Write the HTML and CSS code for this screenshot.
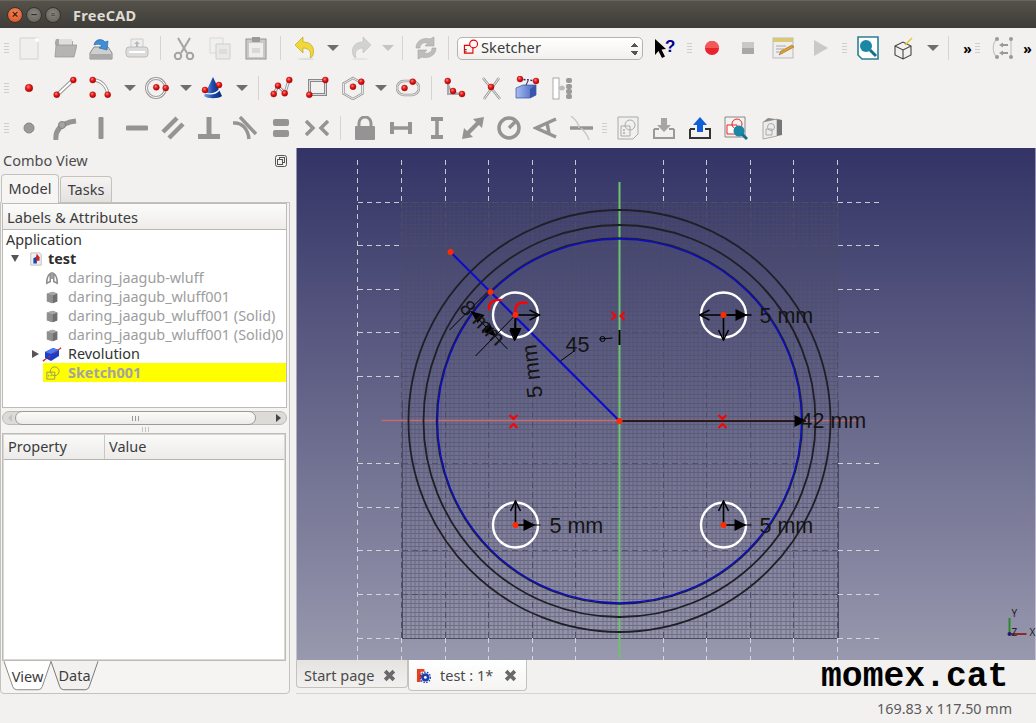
FILE: index.html
```html
<!DOCTYPE html>
<html lang="en">
<head>
<meta charset="utf-8">
<title>FreeCAD</title>
<link rel="stylesheet" href="styles.css">
</head>
<body>
<svg class="defs" width="0" height="0" aria-hidden="true">
<defs>
<radialGradient id="rb" cx="40%" cy="35%" r="65%"><stop offset="0" stop-color="#ff8a80"/><stop offset=".45" stop-color="#ee1c1c"/><stop offset="1" stop-color="#a00"/></radialGradient>
<linearGradient id="cone" x1="0" x2="1"><stop offset="0" stop-color="#7fa6e8"/><stop offset=".5" stop-color="#1a48a8"/><stop offset="1" stop-color="#0b2a70"/></linearGradient>
<linearGradient id="boxb" x1="0" x2="1"><stop offset="0" stop-color="#a8bdf0"/><stop offset="1" stop-color="#3f5fc0"/></linearGradient>
<circle id="b" r="3" fill="url(#rb)" stroke="#900" stroke-width=".4"/>
<symbol id="i-new" viewBox="0 0 24 24"><path d="M3 2h18v21H3z" fill="#efefed" stroke="#d2d2d0"/><circle cx="20" cy="4" r="2" fill="#fff"/></symbol>
<symbol id="i-open" viewBox="0 0 24 24"><path d="M2 6l1-3h7l1 2h9v4H2z" fill="#a9a9a9"/><path d="M6 3h13v6H6z" fill="#dedede"/><path d="M3 9h21l-3 12H2z" fill="#b4b4b4" stroke="#929292" stroke-width=".7"/></symbol>
<symbol id="i-save" viewBox="0 0 24 24"><path d="M5 11h14l4 6v6H1v-6z" fill="#cfcfcf" stroke="#8a8a8a"/><path d="M2 18h20v5H2z" fill="#a9a9a9"/><path d="M5 9c1-6 8-7 11-3l3-1-1 9-8-2 3-2c-2-2-5-2-8-1z" fill="#3f8fd4" stroke="#1f62a8" stroke-width=".6"/></symbol>
<symbol id="i-print" viewBox="0 0 24 24"><path d="M6 3h12v9H6z" fill="#eee" stroke="#ccc"/><path d="M12 5l3 3h-2v3h-2V8H9z" fill="#b9b9b9"/><rect x="1" y="11" width="22" height="10" rx="3" fill="#dcdcdc" stroke="#bbb"/><rect x="4" y="15" width="16" height="2" fill="#fff"/></symbol>
<symbol id="i-cut" viewBox="0 0 24 24" fill="none" stroke="#a3a3a3" stroke-width="2"><path d="M6 2l9 15M18 2L9 17"/><circle cx="6" cy="20" r="3.2"/><circle cx="18" cy="20" r="3.2"/></symbol>
<symbol id="i-copy" viewBox="0 0 24 24"><path d="M2 2h13v15H2z" fill="#f0f0ee" stroke="#d8d8d6"/><path d="M8 8h14v15H8z" fill="#e9e9e7" stroke="#cfcfcd"/><path d="M11 13h8v5h-8z" fill="#dcdcdc"/></symbol>
<symbol id="i-paste" viewBox="0 0 24 24"><rect x="2" y="3" width="20" height="20" fill="#c9c9c9" stroke="#949494"/><rect x="5" y="7" width="14" height="14" fill="#eee"/><rect x="8" y="1" width="8" height="5" fill="#9a9a9a"/><path d="M8 12h8v5H8z" fill="#d8d8d8"/></symbol>
<symbol id="i-undo" viewBox="0 0 24 24"><path d="M2 9l8-8v5c8 0 12 5 10 13-1 2-2 3-3 3 2-6-1-10-7-10v5z" fill="#f0d838" stroke="#b39b1a" stroke-width=".6"/><ellipse cx="13" cy="23" rx="8" ry="1" fill="#ddd"/></symbol>
<symbol id="i-redo" viewBox="0 0 24 24"><path d="M22 9l-8-8v5C6 6 2 11 4 19c1 2 2 3 3 3-2-6 1-10 7-10v5z" fill="#d2d2d2" stroke="#bdbdbd" stroke-width=".6"/><ellipse cx="11" cy="23" rx="8" ry="1" fill="#e4e4e4"/></symbol>
<symbol id="i-ref" viewBox="0 0 24 24" fill="#bdbdbd" stroke="#a5a5a5" stroke-width=".6"><path d="M2 12C2 5 9 1 16 3l4-2v9h-9l3-3C9 6 6 8 6 12z"/><path d="M22 12c0 7-7 11-14 9l-4 2v-9h9l-3 3c5 1 8-1 8-5z"/></symbol>
<symbol id="i-sk" viewBox="0 0 24 24" fill="none" stroke="#e00" stroke-width="1.6"><path d="M2 9h12v11H2z"/><circle cx="15" cy="7" r="5.5" fill="#fff"/><path d="M3 15h2M3 18h2" stroke="#222"/></symbol>
<symbol id="i-what" viewBox="0 0 24 24"><path d="M1 3l11 10-4.500 .5 3.500 7-3 1.500-3.500-7L1 19z" fill="#000"/><text x="11" y="16" class="qm">?</text></symbol>
<symbol id="i-rec" viewBox="0 0 24 24"><circle cx="12" cy="12" r="7" fill="#e8232b"/><path d="M5 12a7 7 0 0114 0z" fill="#f25a5a"/></symbol>
<symbol id="i-stop" viewBox="0 0 24 24"><rect x="6" y="6" width="12" height="12" fill="#c8c8c8"/><rect x="6" y="12" width="12" height="6" fill="#a8a8a8"/></symbol>
<symbol id="i-macro" viewBox="0 0 24 24"><rect x="1" y="2" width="20" height="20" fill="#eee" stroke="#bbb"/><rect x="1" y="2" width="20" height="4" fill="#d8c878"/><path d="M4 10h10M4 13h8M4 16h6" stroke="#aaa"/><path d="M7 19l2-4 11-6 2 2-11 6z" fill="#e0a030" stroke="#8a5a10" stroke-width=".5"/></symbol>
<symbol id="i-play" viewBox="0 0 24 24"><path d="M6 4l14 8-14 8z" fill="#c9c9c9"/></symbol>
<symbol id="i-view" viewBox="0 0 24 24"><path d="M2 1h20v22H6l-4-4z" fill="#fff" stroke="#2c7f94" stroke-width="1.600"/><circle cx="10" cy="10" r="6" fill="#1b87a6"/><path d="M14 14l6 6" stroke="#16708a" stroke-width="3"/></symbol>
<symbol id="i-cube" viewBox="0 0 24 24"><path d="M3 10l8-4 8 4v9l-8 4-8-4zM3 10l8 4 8-4M11 14v9" fill="none" stroke="#444" stroke-width="1.100"/><path d="M13 9l7-7" stroke="#e8c830" stroke-width="1.500"/></symbol>
<symbol id="i-flip" viewBox="0 0 24 24" fill="none" stroke="#c4c4c4" stroke-width="1.200"><path d="M7 3C2 7 2 17 7 21M21 3v18"/><path d="M11 9h7M11 17h7" stroke="#999" stroke-width="1.800"/><g fill="#999" stroke="none"><circle cx="7" cy="3" r="2"/><circle cx="7" cy="21" r="2"/><circle cx="21" cy="3" r="2"/><circle cx="21" cy="21" r="2"/><path d="M9 9l4-2.500v5zM9 17l4-2.500v5z"/></g></symbol>
<symbol id="p-point" viewBox="0 0 24 24"><circle cx="12" cy="12" r="3.800" fill="url(#rb)" stroke="#900" stroke-width=".4"/></symbol>
<symbol id="p-line" viewBox="0 0 24 24"><path d="M4 19L20 4" stroke="#999" stroke-width="4"/><path d="M4 19L20 4" stroke="#fff" stroke-width="1.800"/><use href="#b" x="3.700" y="18.700"/><use href="#b" x="20.300" y="4"/></symbol>
<symbol id="p-arc" viewBox="0 0 24 24"><path d="M4 4c8 0 14 6 15 15" fill="none" stroke="#999" stroke-width="3.500"/><path d="M4 4c8 0 14 6 15 15" fill="none" stroke="#fff" stroke-width="1.500"/><use href="#b" x="3.700" y="4"/><use href="#b" x="3.700" y="18.700"/><use href="#b" x="18.700" y="18.700"/></symbol>
<symbol id="p-circle" viewBox="0 0 24 24"><circle cx="11" cy="12" r="9.500" fill="none" stroke="#999" stroke-width="3"/><circle cx="11" cy="12" r="9.500" fill="none" stroke="#fff"/><use href="#b" x="11.300" y="11.300"/><use href="#b" x="20.700" y="12"/></symbol>
<symbol id="p-conic" viewBox="0 0 24 24"><path d="M12 1l9 19c-3 3-15 3-18 0z" fill="url(#cone)"/><path d="M4 17c6 2 11 1 15-4" fill="none" stroke="#fff" stroke-width="1.300"/><use href="#b" x="4" y="14" /><use href="#b" x="18" y="9"/></symbol>
<symbol id="p-poly" viewBox="0 0 24 24"><path d="M4 18L8 10l7 7 4-13" fill="none" stroke="#999" stroke-width="3"/><path d="M4 18L8 10l7 7 4-13" fill="none" stroke="#fff"/><use href="#b" x="3.700" y="18"/><use href="#b" x="8" y="9.700"/><use href="#b" x="14.700" y="17.300"/><use href="#b" x="19.300" y="4"/></symbol>
<symbol id="p-rect" viewBox="0 0 24 24"><path d="M3.500 4.500h16v14h-16z" fill="none" stroke="#888" stroke-width="3"/><path d="M3.500 4.500h16v14h-16z" fill="none" stroke="#ddd"/><use href="#b" x="3.300" y="18.700"/><use href="#b" x="19.300" y="4"/></symbol>
<symbol id="p-hex" viewBox="0 0 24 24"><path d="M12 2l9.500 5.500v10L12 23l-9.500-5.500v-10z" fill="none" stroke="#999" stroke-width="2.500"/><path d="M12 2l9.500 5.500v10L12 23l-9.500-5.500v-10z" fill="none" stroke="#fff" stroke-width=".8"/><use href="#b" x="12" y="10.700"/><use href="#b" x="20.300" y="5.700"/></symbol>
<symbol id="p-slot" viewBox="0 0 24 24"><rect x="1" y="5" width="22" height="14" rx="7" fill="none" stroke="#999" stroke-width="2.500"/><rect x="1" y="5" width="22" height="14" rx="7" fill="none" stroke="#fff" stroke-width=".8"/><use href="#b" x="8.500" y="12"/><use href="#b" x="16.700" y="5.700"/></symbol>
<symbol id="p-fillet" viewBox="0 0 24 24"><path d="M5 3v15h16M5 8c1 6 6 10 14 10" fill="none" stroke="#aaa" stroke-width="2"/><use href="#b" x="4.700" y="5"/><use href="#b" x="10" y="15"/><use href="#b" x="19" y="18"/></symbol>
<symbol id="p-trim" viewBox="0 0 24 24"><path d="M4 2l17 21M20 2L5 23" stroke="#999" stroke-width="2.500"/><path d="M4 2l17 21M20 2L5 23" stroke="#fff" stroke-width=".8"/><use href="#b" x="12" y="11"/></symbol>
<symbol id="p-ext" viewBox="0 0 24 24"><path d="M1 12l7-3h13v10l-6 3H1z" fill="url(#boxb)" stroke="#34509c" stroke-width=".7"/><path d="M15 13v9l6-3v-10z" fill="#3a55a8"/><path d="M11 9l2-4" stroke="#223"/><path d="M5 3l16 2" stroke="#2a2a8a" stroke-width="1.500" stroke-dasharray="2 1.500"/><use href="#b" x="5" y="3" /><use href="#b" x="21" y="5"/></symbol>
<symbol id="p-carb" viewBox="0 0 24 24"><rect x="2" y="2" width="6" height="21" fill="#fff" stroke="#aaa"/><path d="M8 12h6" stroke="#999"/><circle cx="11" cy="12" r="2.500" fill="#bbb"/><rect x="15" y="2" width="6" height="5" rx="2" fill="#9a9a9a"/><rect x="15" y="8" width="6" height="5" rx="2" fill="#9a9a9a"/><rect x="15" y="13" width="6" height="5" rx="2" fill="#9a9a9a"/><rect x="15" y="18" width="6" height="5" rx="2" fill="#9a9a9a"/></symbol>
<symbol id="c-pt" viewBox="0 0 24 24"><circle cx="12" cy="12" r="5" fill="#9a9a9a" stroke="#858585"/></symbol>
<symbol id="c-tan" viewBox="0 0 24 24" fill="none" stroke="#949494" stroke-width="5"><path d="M3 24c-1-8 3-17 20-19"/><circle cx="9" cy="9" r="3.500" fill="#a5a5a5" stroke="#808080" stroke-width="1"/></symbol>
<symbol id="c-v" viewBox="0 0 24 24"><rect x="9.500" y="1" width="5" height="22" rx="1" fill="#949494"/></symbol>
<symbol id="c-h" viewBox="0 0 24 24"><rect x="1" y="9.500" width="22" height="5" rx="1" fill="#949494"/></symbol>
<symbol id="c-par" viewBox="0 0 24 24"><path d="M2 16L16 2M8 22L22 8" stroke="#949494" stroke-width="4.500"/></symbol>
<symbol id="c-perp" viewBox="0 0 24 24"><path d="M12 1v17" stroke="#949494" stroke-width="5"/><rect x="1" y="18" width="22" height="5" fill="#949494"/></symbol>
<symbol id="c-tang" viewBox="0 0 24 24" fill="none" stroke="#949494" stroke-width="3.500"><path d="M7 1l16 17"/><path d="M0 7c9-1 15 6 16 16"/></symbol>
<symbol id="c-eq" viewBox="0 0 24 24"><rect x="4" y="3" width="16" height="7" rx="2" fill="#949494"/><rect x="4" y="14" width="16" height="7" rx="2" fill="#949494"/></symbol>
<symbol id="c-sym" viewBox="0 0 24 24" fill="none" stroke="#949494" stroke-width="3.500"><path d="M1 5l7 7-7 7M23 5l-7 7 7 7"/></symbol>
<symbol id="c-lock" viewBox="0 0 24 24"><path d="M6 11V7a6 6 0 0112 0v4" fill="none" stroke="#949494" stroke-width="3"/><rect x="2" y="10" width="20" height="14" rx="1" fill="#949494"/></symbol>
<symbol id="c-hd" viewBox="0 0 24 24"><path d="M3 6v12M21 6v12" stroke="#949494" stroke-width="4"/><path d="M3 12h18" stroke="#949494" stroke-width="3.500"/></symbol>
<symbol id="c-vd" viewBox="0 0 24 24"><path d="M6 3h12M6 21h12" stroke="#949494" stroke-width="4"/><path d="M12 3v18" stroke="#949494" stroke-width="3.500"/></symbol>
<symbol id="c-dist" viewBox="0 0 24 24"><path d="M5 19L19 5" stroke="#949494" stroke-width="4"/><path d="M1 23l2-11 9 9zM23 1l-2 11-9-9z" fill="#949494"/></symbol>
<symbol id="c-rad" viewBox="0 0 24 24" fill="none" stroke="#949494" stroke-width="3.500"><circle cx="12" cy="12" r="10"/><path d="M12 12l6-6"/></symbol>
<symbol id="c-ang" viewBox="0 0 24 24" fill="none" stroke="#949494" stroke-width="3.500"><path d="M23 3L3 12l20 9"/><path d="M14 7l2 10"/></symbol>
<symbol id="c-snell" viewBox="0 0 24 24"><path d="M1 12h23" stroke="#949494" stroke-width="3.500"/><path d="M2 0c5 4 8 8 8 12M12 12c4 4 7 8 8 12" fill="none" stroke="#c9c9c9" stroke-width="1.500"/></symbol>
<symbol id="s-sheet" viewBox="0 0 24 24"><path d="M2 1h20v17l-5 5H2z" fill="#f0f0ee" stroke="#aaa"/><path d="M5 10h9v10H5z" fill="none" stroke="#aaa"/><circle cx="14" cy="9" r="5" fill="none" stroke="#aaa"/><path d="M7 14h2M7 17h2" stroke="#888"/></symbol>
<symbol id="s-in" viewBox="0 0 24 24"><path d="M2 13v9h20v-9" fill="none" stroke="#9a9a9a" stroke-width="2"/><path d="M2 13h5M17 13h5" stroke="#9a9a9a" stroke-width="2"/><path d="M9 2h6v7h4l-7 7-7-7h4z" fill="#a5a5a5"/></symbol>
<symbol id="s-out" viewBox="0 0 24 24"><path d="M2 13v9h20v-9h-5M7 13H2" fill="none" stroke="#333" stroke-width="2"/><path d="M9 16h6V9h4l-7-8-7 8h4z" fill="#0f5fd8"/></symbol>
<symbol id="s-look" viewBox="0 0 24 24"><path d="M1 1h20v20H1z" fill="#f2f2f0" stroke="#888"/><path d="M3 9h10v9H3z" fill="#fff" stroke="#e22"/><circle cx="13" cy="8" r="5" fill="none" stroke="#e22"/><circle cx="15" cy="15" r="5.500" fill="#1b87a6"/><path d="M18 18l5 5" stroke="#16708a" stroke-width="3"/></symbol>
<symbol id="s-3d" viewBox="0 0 24 24"><path d="M3 6l14-3v17L3 23z" fill="#ececec" stroke="#aaa"/><path d="M17 3l5 1v15l-5 1z" fill="#777"/><path d="M3 6l5-4 14 2-5-1z" fill="#888"/><circle cx="11" cy="11" r="3.500" fill="none" stroke="#aaa"/><path d="M6 13h6v6H6z" fill="none" stroke="#aaa"/></symbol>
<symbol id="t-doc" viewBox="0 0 16 16"><path d="M2 1h10l2 2v12H2z" fill="#eee" stroke="#bbb"/><path d="M5 7l4-2v8H5z" fill="#1a45b0"/><path d="M9 2l3 4v4H8V5z" fill="#c22"/></symbol>
<symbol id="t-part" viewBox="0 0 16 16"><path d="M2 4l7-2 5 2v9l-6 2-6-2z" fill="#8f8f8f"/><path d="M9 6l5-2v9l-5 2z" fill="#6f6f6f"/><path d="M2 4l7-2 5 2-5 2z" fill="#a8a8a8"/></symbol>
<symbol id="t-lung" viewBox="0 0 16 16" fill="none" stroke="#8e8e8e" stroke-width="1.800"><path d="M6 3C3 5 2 9 2 14l4-2zM10 3c3 2 4 6 4 11l-4-2zM8 1v8"/></symbol>
<symbol id="t-rev" viewBox="0 0 20 16"><path d="M1 15L19 2" stroke="#e22" stroke-width="1.200"/><path d="M3 6l8-4 6 2v6l-8 5-6-3z" fill="#1d3fc8"/><path d="M3 6l8-4 6 2-8 4z" fill="#4f79ee"/><path d="M1 15L19 2" stroke="#e22" stroke-width="1.200" stroke-dasharray="2 5"/></symbol>
<symbol id="t-sk" viewBox="0 0 16 16" fill="none" stroke="#9a9a60" stroke-width="1.100"><path d="M1 7h9v8H1z"/><circle cx="10" cy="6" r="5"/><path d="M3 10v2M5 11h2"/></symbol>
<symbol id="t-test" viewBox="0 0 16 16"><path d="M1 1h8v3H5v3h3v3H5v5H1z" fill="#e8401c"/><circle cx="10" cy="10" r="4.500" fill="#1b3fb0"/><circle cx="10" cy="10" r="1.500" fill="#fff"/><circle cx="10" cy="10" r="5.500" fill="none" stroke="#1b3fb0" stroke-width="1.400" stroke-dasharray="1.500 1.500"/></symbol>
<symbol id="t-x" viewBox="0 0 12 12"><path d="M2 2l8 8M10 2l-8 8" stroke="#6a6a6a" stroke-width="3.400"/></symbol>
<symbol id="t-float" viewBox="0 0 12 12" fill="none" stroke="#555"><rect x=".5" y=".5" width="11" height="11" rx="2"/><rect x="4.500" y="2.500" width="5" height="5"/><rect x="2.500" y="4.500" width="5" height="5" fill="#f2f1f0"/></symbol>
<pattern id="fine" x="402" y="202" width="218" height="218" patternUnits="userSpaceOnUse"><path class="fine-ln" d="M.5 0V218M4.500 0V218M9.500 0V218M13.500 0V218M17.500 0V218M22.500 0V218M26.500 0V218M31.500 0V218M35.500 0V218M39.500 0V218M44.500 0V218M48.500 0V218M52.500 0V218M57.500 0V218M61.500 0V218M65.500 0V218M70.500 0V218M74.500 0V218M78.500 0V218M83.500 0V218M87.500 0V218M92.500 0V218M96.500 0V218M100.500 0V218M105.500 0V218M109.500 0V218M113.500 0V218M118.500 0V218M122.500 0V218M126.500 0V218M131.500 0V218M135.500 0V218M140.500 0V218M144.500 0V218M148.500 0V218M153.500 0V218M157.500 0V218M161.500 0V218M166.500 0V218M170.500 0V218M174.500 0V218M179.500 0V218M183.500 0V218M187.500 0V218M192.500 0V218M196.500 0V218M201.500 0V218M205.500 0V218M209.500 0V218M214.500 0V218M0 .5H218M0 4.500H218M0 9.500H218M0 13.500H218M0 17.500H218M0 22.500H218M0 26.500H218M0 31.500H218M0 35.500H218M0 39.500H218M0 44.500H218M0 48.500H218M0 52.500H218M0 57.500H218M0 61.500H218M0 65.500H218M0 70.500H218M0 74.500H218M0 78.500H218M0 83.500H218M0 87.500H218M0 92.500H218M0 96.500H218M0 100.500H218M0 105.500H218M0 109.500H218M0 113.500H218M0 118.500H218M0 122.500H218M0 126.500H218M0 131.500H218M0 135.500H218M0 140.500H218M0 144.500H218M0 148.500H218M0 153.500H218M0 157.500H218M0 161.500H218M0 166.500H218M0 170.500H218M0 174.500H218M0 179.500H218M0 183.500H218M0 187.500H218M0 192.500H218M0 196.500H218M0 201.500H218M0 205.500H218M0 209.500H218M0 214.500H218"/></pattern>
<marker id="fill" viewBox="0 0 12 12" refX="11" refY="6" markerWidth="14" markerHeight="12" markerUnits="userSpaceOnUse" orient="auto"><path d="M0 0l12 6-12 6z"/></marker>
<marker id="open" viewBox="0 0 12 12" refX="11" refY="6" markerWidth="12" markerHeight="12" markerUnits="userSpaceOnUse" orient="auto"><path d="M1 1l10 5-10 5" fill="none" stroke="#000" stroke-width="1.500"/></marker>
</defs>
</svg>

<div class="app">
<header class="titlebar">
  <div class="wbtns"><span class="wbtn wclose">×</span><span class="wbtn">–</span><span class="wbtn">▫</span></div>
  <span class="wtitle">FreeCAD</span>
</header>

<section class="toolbars">
  <div class="tb">
    <i class="grip"></i>
    <svg class="t"><use href="#i-new"/></svg><svg class="t"><use href="#i-open"/></svg><svg class="t"><use href="#i-save"/></svg><svg class="t"><use href="#i-print"/></svg>
    <i class="sep sep-a"></i>
    <svg class="t"><use href="#i-cut"/></svg><svg class="t"><use href="#i-copy"/></svg><svg class="t"><use href="#i-paste"/></svg>
    <i class="sep sep-b"></i>
    <svg class="t"><use href="#i-undo"/></svg><b class="dd dd-n"></b><svg class="t"><use href="#i-redo"/></svg><b class="dd dd-off"></b>
    <i class="sep sep-a"></i>
    <svg class="t"><use href="#i-ref"/></svg>
    <i class="sep"></i>
    <div class="wb"><svg class="wb-ic"><use href="#i-sk"/></svg><span class="wb-name">Sketcher</span><span class="wb-spin"></span></div>
    <svg class="t"><use href="#i-what"/></svg>
    <i class="grip grip-a"></i>
    <svg class="t"><use href="#i-rec"/></svg><svg class="t"><use href="#i-stop"/></svg><svg class="t"><use href="#i-macro"/></svg><svg class="t"><use href="#i-play"/></svg>
    <i class="grip grip-b"></i>
    <svg class="t"><use href="#i-view"/></svg><svg class="t"><use href="#i-cube"/></svg><b class="dd"></b>
    <i class="sep sep-d"></i>
    <span class="more">»</span>
    <i class="grip grip-s"></i>
    <svg class="t t-n"><use href="#i-flip"/></svg>
    <span class="more more-e">»</span>
  </div>
  <div class="tb">
    <i class="grip"></i>
    <svg class="t"><use href="#p-point"/></svg><svg class="t"><use href="#p-line"/></svg><svg class="t"><use href="#p-arc"/></svg><b class="dd"></b>
    <svg class="t t-n2"><use href="#p-circle"/></svg><b class="dd"></b>
    <svg class="t t-n2"><use href="#p-conic"/></svg><b class="dd"></b>
    <i class="sep sep-w"></i>
    <svg class="t"><use href="#p-poly"/></svg><svg class="t"><use href="#p-rect"/></svg><svg class="t t-n3"><use href="#p-hex"/></svg><b class="dd"></b>
    <svg class="t t-n2"><use href="#p-slot"/></svg>
    <i class="sep sep-w"></i>
    <svg class="t"><use href="#p-fillet"/></svg><svg class="t"><use href="#p-trim"/></svg><svg class="t"><use href="#p-ext"/></svg><svg class="t"><use href="#p-carb"/></svg>
  </div>
  <div class="tb">
    <i class="grip"></i>
    <svg class="t"><use href="#c-pt"/></svg><svg class="t"><use href="#c-tan"/></svg><svg class="t"><use href="#c-v"/></svg><svg class="t"><use href="#c-h"/></svg><svg class="t"><use href="#c-par"/></svg><svg class="t"><use href="#c-perp"/></svg><svg class="t"><use href="#c-tang"/></svg><svg class="t"><use href="#c-eq"/></svg><svg class="t"><use href="#c-sym"/></svg>
    <i class="sep sep-w sep-c"></i>
    <svg class="t"><use href="#c-lock"/></svg><svg class="t"><use href="#c-hd"/></svg><svg class="t"><use href="#c-vd"/></svg><svg class="t"><use href="#c-dist"/></svg><svg class="t"><use href="#c-rad"/></svg><svg class="t"><use href="#c-ang"/></svg><svg class="t"><use href="#c-snell"/></svg>
    <i class="grip grip-m"></i>
    <svg class="t"><use href="#s-sheet"/></svg><svg class="t"><use href="#s-in"/></svg><svg class="t"><use href="#s-out"/></svg><svg class="t"><use href="#s-look"/></svg><svg class="t"><use href="#s-3d"/></svg>
  </div>
</section>

<main class="main">
<aside class="combo">
  <div class="combo-head"><span>Combo View</span><svg class="float"><use href="#t-float"/></svg></div>
  <div class="tabs"><span class="tab tab-on">Model</span><span class="tab">Tasks</span></div>
  <div class="group">
    <div class="tree">
      <div class="tree-head">Labels &amp; Attributes</div>
      <div class="row r0">Application</div>
      <div class="row r1"><b class="arr arr-d"></b><svg class="ti"><use href="#t-doc"/></svg><strong>test</strong></div>
      <div class="row r2 dim"><svg class="ti"><use href="#t-lung"/></svg>daring_jaagub-wluff</div>
      <div class="row r2 dim"><svg class="ti"><use href="#t-part"/></svg>daring_jaagub_wluff001</div>
      <div class="row r2 dim"><svg class="ti"><use href="#t-part"/></svg>daring_jaagub_wluff001 (Solid)</div>
      <div class="row r2 dim"><svg class="ti"><use href="#t-part"/></svg>daring_jaagub_wluff001 (Solid)0</div>
      <div class="row r3"><b class="arr arr-r"></b><svg class="ti ti-w"><use href="#t-rev"/></svg>Revolution</div>
      <div class="row r4"><div class="sel"><svg class="ti"><use href="#t-sk"/></svg><strong>Sketch001</strong></div></div>
    </div>
    <div class="scroll">
      <b class="sb-l"></b><div class="thumb"><span class="thumb-grip"></span></div><b class="sb-r"></b>
    </div>
    <div class="split"></div>
    <div class="props">
      <div class="props-head"><span class="pcol">Property</span><span class="vcol">Value</span></div>
    </div>
    <div class="vdtabs">
      <span class="vd vd-on"><svg class="vd-shape" viewBox="0 0 50 30"><path d="M1 0l9 26q1 3 4 3h22q3 0 4-3l9-26" fill="#fff" stroke="#888"/></svg><span class="vd-t">View</span></span>
      <span class="vd vd-off"><svg class="vd-shape" viewBox="0 0 50 30"><path d="M1 0l9 26q1 3 4 3h22q3 0 4-3l9-26" fill="#f2f1f0" stroke="#777"/></svg><span class="vd-t">Data</span></span>
    </div>
  </div>
</aside>

<div class="work">
<svg class="scene" viewBox="297 148 739 512" role="img" aria-label="Sketch in 3D view">
  <defs><linearGradient id="bg" x1="0" x2="0" y1="0" y2="1"><stop offset="0" stop-color="#333366"/><stop offset="1" stop-color="#9898ae"/></linearGradient></defs>
  <rect x="297" y="148" width="739" height="512" fill="url(#bg)"/>
  <rect x="402" y="202" width="437" height="437" fill="url(#fine)"/>
  <path class="ln-major" d="M445.600 202V638M489.200 202V638M532.800 202V638M576.400 202V638M663.600 202V638M707.200 202V638M750.800 202V638M794.400 202V638M402 245.600H838M402 289.200H838M402 332.800H838M402 376.400H838M402 463.600H838M402 507.200H838M402 550.800H838M402 594.400H838M402 202V638M838 202V638M402 202H838"/>
  <path class="grid-edge" d="M402 638.500H839M838.500 400V639M402.500 400V639"/>
  <path class="ln-dash" d="M358 160V660M402 160V202M445.600 160V202M489.200 160V202M532.800 160V202M576.400 160V202M663.600 160V202M707.200 160V202M750.800 160V202M794.400 160V202M838 160V202M402 638V660M445.600 638V660M489.200 638V660M532.800 638V660M576.400 638V660M663.600 638V660M707.200 638V660M750.800 638V660M794.400 638V660M838 638V660M358 202H402M358 245.600H402M358 289.200H402M358 332.800H402M358 376.400H402M358 463.600H402M358 507.200H402M358 550.800H402M358 594.400H402M358 638H402M838 202H882M838 245.600H882M838 289.200H882M838 332.800H882M838 376.400H882M838 463.600H882M838 507.200H882M838 550.800H882M838 594.400H882M838 638H882M838 420.500H858"/>

  <path class="ax-x" d="M382 420.500H858"/>
  <path class="ax-y" d="M620 182V658"/>

  <circle class="c-k" cx="620" cy="421" r="211"/>
  <circle class="c-k" cx="620" cy="421" r="196"/>
  <circle class="c-k c-thin" cx="620" cy="421" r="183"/>
  <circle class="c-b" cx="620" cy="421" r="182"/>
  <path class="c-bl" d="M451 252L620 421"/>

  <circle class="hole" cx="516" cy="315" r="22.500"/>
  <circle class="hole" cx="724" cy="315" r="22.500"/>
  <circle class="hole" cx="516" cy="525" r="22.500"/>
  <circle class="hole" cx="724" cy="525" r="22.500"/>

  <path class="dim-l" marker-end="url(#fill)" d="M620 421H806"/>
  <path class="dim-l" marker-end="url(#open)" d="M752 315H700"/>
  <path class="dim-l" marker-end="url(#fill)" d="M724 315H747"/>
  <path class="dim-l" marker-end="url(#open)" d="M724 315V340"/>
  <path class="dim-l" marker-end="url(#open)" d="M516 525V501"/>
  <path class="dim-l" marker-end="url(#fill)" d="M516 525H535"/>
  <path class="dim-t" d="M535 525H541"/>
  <path class="dim-l" marker-end="url(#open)" d="M724 525V501"/>
  <path class="dim-l" marker-end="url(#fill)" d="M724 525H746"/>
  <path class="dim-t" d="M746 525H752"/>
  <path class="dim-l" marker-end="url(#open)" d="M516 315H540"/>
  <path class="dim-l" marker-end="url(#fill)" d="M516 315V339"/>
  <path class="dim-l" marker-end="url(#open)" d="M516 315L515 340"/>
  <path class="dim-t" d="M450 330L490 290M476 356L515 316M471 311L508 349"/>
  <path class="arrow" d="M471 311l14 4-7 8zM497 337l-15-6 8-8z"/>
  <path class="dim-t" d="M561 361L576 350M600 339L613 338"/>
  <circle class="ring" cx="603" cy="339" r="2.500"/>
  <path class="vtick" d="M620 330V345"/>

  <text class="dim-txt" x="760" y="323">5 mm</text>
  <text class="dim-txt" x="550" y="533">5 mm</text>
  <text class="dim-txt" x="760" y="533">5 mm</text>
  <text class="dim-txt" x="801" y="428">42 mm</text>
  <text class="dim-txt" x="566" y="352">45</text>
  <text class="dim-txt" transform="translate(459 309) rotate(45)">8 mm</text>
  <text class="dim-txt" transform="translate(543 397) rotate(-97)">5 mm</text>

  <path class="red" d="M490 310c-2-6 3-11 12-10M516 312c-1-7 4-11 12-9"/>
  <circle class="dot" cx="451" cy="252" r="3"/>
  <circle class="dot" cx="516" cy="315" r="3"/>
  <circle class="dot" cx="724" cy="315" r="3"/>
  <circle class="dot" cx="516" cy="525" r="3"/>
  <circle class="dot" cx="724" cy="525" r="3"/>
  <circle class="dot" cx="620" cy="421" r="3"/>
  <circle class="dot" cx="491" cy="292" r="3"/>
  <path class="cross" d="M612 312l4 4-4 4M625 312l-4 4 4 4M510 415l4 4 4-4M510 428l4-4 4 4M719 415l4 4 4-4M719 428l4-4 4 4"/>

  <path class="ax-g" d="M1010 634V618"/>
  <path class="ax-r" d="M1010 634H1027"/>
  <circle class="ax-o" cx="1010" cy="634" r="2"/>
  <text class="ax-t" x="1012" y="617">Y</text>
  <text class="ax-t" x="1012" y="636">Z</text>
  <text class="ax-t" x="1030" y="636">X</text>
</svg>
<div class="docbar">
  <span class="dtab"><span>Start page</span><svg class="dx"><use href="#t-x"/></svg></span>
  <span class="dtab dtab-on"><svg class="dti"><use href="#t-test"/></svg><span>test : 1*</span><svg class="dx"><use href="#t-x"/></svg></span>
  <span class="brand">momex.cat</span>
</div>
</div>
</main>
<footer class="status">169.83 x 117.50 mm</footer>
</div>
</body>
</html>
```
FILE: styles.css
```css
* { box-sizing: border-box; }
html, body { margin: 0; padding: 0; }
body { width: 1036px; height: 723px; overflow: hidden; background: #f2f1f0; font-family: "Noto Sans", "Open Sans", sans-serif; font-size: 14.4px; color: #3c3c3c; }
.defs { position: absolute; }
.app { display: flex; flex-direction: column; height: 723px; }
.qm { font: bold 17px "Liberation Sans", sans-serif; fill: #00008b; }

.titlebar { height: 28px; flex: none; display: flex; align-items: center; background: linear-gradient(#55524b, #3e3c37); border-top: 1px solid #6a665e; }
.wbtns { display: flex; gap: 3px; padding-left: 7px; width: 73px; }
.wbtn { width: 16px; height: 16px; border-radius: 50%; background: radial-gradient(circle at 50% 40%, #8a8780, #5e5b55); border: 1px solid #35332f; color: #2f2d2a; font: bold 11px/13px "Liberation Sans", sans-serif; text-align: center; }
.wclose { background: radial-gradient(circle at 50% 35%, #f08a5e, #d9491f); color: #4a1a0a; }
.wtitle { font-weight: 700; font-size: 14.5px; color: #dfdbd2; letter-spacing: .3px; }

.toolbars { flex: none; height: 120px; display: flex; flex-direction: column; }
.tb { height: 40px; display: flex; align-items: center; }
.t { width: 24px; height: 24px; margin: 0 6px; flex: none; }
.t-n { margin: 0 0 0 8px; }
.t-n2 { margin: 0 6px 0 4px; }
.t-n3 { margin: 0 5px 0 5px; }
.grip { width: 5px; height: 10px; margin: 0 0 0 4px; flex: none; display: block; background: repeating-linear-gradient(#cfcecb 0 1px, transparent 1px 3px); }
.tb > .grip:first-child { margin-right: 2px; }
.grip-a { margin: 0 2px 0 3px; }
.grip-b { margin: 0 3px 0 4px; }
.grip-m { margin: 0 3px; }
.grip-s { margin: 0 2px 0 0; }
.sep { width: 1px; height: 24px; margin: 0 5px 0 4px; background: #d5d4d1; flex: none; }
.sep-a { margin: 0 5px; }
.sep-b { margin: 0 6px 0 6px; }
.sep-d { margin: 0 6px 0 4px; }
.sep-w { margin: 0 5px; }
.sep-c { margin: 0 6px 0 5px; }
.dd { width: 0; height: 0; flex: none; margin: 0 5px; border-left: 6px solid transparent; border-right: 6px solid transparent; border-top: 6px solid #6e6e6e; }
.dd-n { margin: 0 4px; }
.dd-off { border-top-color: #c4c4c4; margin: 0 3px; }
.wb { width: 186px; height: 23px; margin-left: 3px; margin-right: 5px; display: flex; align-items: center; flex: none; border: 1px solid #b5b3ae; border-radius: 5px; background: linear-gradient(#fff, #f1f0ee); position: relative; padding-left: 5px; padding-bottom: 2px; font-size: 14.7px; color: #3c3c3c; }
.wb-ic { width: 17px; height: 17px; margin-right: 1px; }
.wb-spin { position: absolute; right: 3px; top: 5px; width: 8px; height: 12px; background: linear-gradient(135deg, transparent 50%, #555 50%) left top/4px 4px no-repeat, linear-gradient(225deg, transparent 50%, #555 50%) right top/4px 4px no-repeat, linear-gradient(45deg, transparent 50%, #555 50%) left bottom/4px 4px no-repeat, linear-gradient(315deg, transparent 50%, #555 50%) right bottom/4px 4px no-repeat; }
.more { font-weight: 700; color: #000; width: 15px; margin-left: 5px; font-size: 14px; text-align: center; flex: none; }
.more-e { margin-left: 6px; }

.main { flex: none; height: 546px; display: flex; }
.combo { width: 296px; flex: none; display: flex; flex-direction: column; }
.combo-head { height: 25px; flex: none; display: flex; align-items: center; justify-content: space-between; padding: 0 9px 2px 3px; font-size: 14.5px; color: #4c4c4c; }
.float { width: 12px; height: 12px; margin-top: 2px; }
.tabs { height: 29px; flex: none; display: flex; align-items: flex-end; padding-left: 1px; gap: 1px; }
.tab { height: 26px; width: 52px; padding-top: 2px; text-align: center; border: 1px solid #c4c2bd; border-bottom: 0; border-radius: 4px 4px 0 0; background: linear-gradient(#f5f4f3, #e2e1de); font-size: 14.5px; }
.tab-on { height: 29px; width: 58px; background: #f6f5f4; position: relative; z-index: 1; margin-bottom: -1px; padding-top: 3px; }
.group { width: 290px; flex: 1; border: 1px solid #c4c2bd; border-radius: 0 0 4px 4px; padding: 0 1px; display: flex; flex-direction: column; background: #f5f4f3; }
.tree { height: 205px; flex: none; background: #fff; border: 1px solid #bdbbb6; margin-right: 1px; overflow: hidden; }
.tree-head { height: 26px; line-height: 26px; padding-left: 4px; background: linear-gradient(#fbfbfa, #eeedeb); border-bottom: 1px solid #b9b7b2; font-size: 14.7px; }
.row { height: 19px; display: flex; align-items: center; white-space: nowrap; font-size: 14.4px; color: #333; }
.row strong { font-weight: 700; }
.r0 { padding-left: 3px; }
.r1 { padding-left: 8px; }
.r1 strong { margin-left: 5px; color: #2d2d2d; }
.r2 { padding-left: 42px; }
.r2 .ti { margin-right: 9px; }
.r3 { padding-left: 29px; }
.r3 .ti { margin-right: 6px; }
.r4 { padding-left: 40px; }
.dim { color: #9d9d9d; }
.arr { width: 0; height: 0; flex: none; display: block; }
.arr-d { border-left: 4.5px solid transparent; border-right: 4.5px solid transparent; border-top: 7px solid #555; margin-right: 10px; }
.arr-r { border-top: 4.5px solid transparent; border-bottom: 4.5px solid transparent; border-left: 7px solid #555; margin-right: 3px; }
.ti { width: 14px; height: 14px; flex: none; }
.ti-w { width: 20px; height: 16px; }
.sel { flex: 1; height: 19px; background: #ffff00; display: flex; align-items: center; padding-left: 3px; color: #a3a3a3; }
.sel strong { margin-left: 8px; font-weight: 700; }
.scroll { height: 14px; margin-top: 3px; margin-right: 1px; flex: none; display: flex; align-items: center; border: 1px solid #bdbbb6; border-radius: 7px; background: #dcdbd8; position: relative; }
.thumb { position: absolute; left: 12px; top: -1px; bottom: -1px; width: 241px; border: 1px solid #9c9a95; border-radius: 7px; background: linear-gradient(#fbfbfa, #ecebe9); display: flex; align-items: center; justify-content: center; }
.thumb-grip { width: 7px; height: 5px; background: repeating-linear-gradient(90deg, #999 0 1px, transparent 1px 3px); }
.sb-l, .sb-r { position: absolute; width: 0; height: 0; top: 2px; border-top: 4px solid transparent; border-bottom: 4px solid transparent; }
.sb-l { left: 5px; border-right: 4px solid #c4c4c4; }
.sb-r { right: 5px; border-left: 5px solid #444; }
.split { height: 8px; flex: none; background: repeating-linear-gradient(90deg, #c4c4c4 0 1px, transparent 1px 3px) center/7px 5px no-repeat; }
.props { height: 228px; flex: none; background: #fff; border: 1px solid #bdbbb6; margin: 0 2px 0 0; outline: 1px solid #d9d8d5; outline-offset: -2px; }
.props-head { height: 26px; display: flex; align-items: center; background: linear-gradient(#fafaf9, #ecebe9); border: 1px solid #d6d5d2; border-bottom: 1px solid #b5b3ae; font-size: 14.5px; line-height: 22px; }
.pcol { width: 101px; padding-left: 4px; height: 100%; border-right: 1px solid #c9c7c3; }
.vcol { padding-left: 4px; height: 100%; }
.vdtabs { display: flex; height: 30px; flex: none; padding-left: 1px; }
.vd { width: 49px; height: 30px; position: relative; margin-right: -2px; display: block; }
.vd-shape { position: absolute; left: 0; top: 0; width: 49px; height: 30px; }
.vd-t { position: absolute; left: 0; width: 49px; top: 5px; text-align: center; font-size: 14.5px; color: #3c3c3c; }
.vd-off .vd-t { top: 4px; }

.work { flex: 1; display: flex; flex-direction: column; min-width: 0; }
.scene { width: 740px; height: 512px; display: block; flex: none; }
.docbar { flex: 1; display: flex; align-items: flex-start; border-bottom: 1px solid #d6d5d2; position: relative; font-size: 14.5px; }
.dtab { height: 28px; display: flex; align-items: center; width: 112px; padding: 3px 0 0 7px; border: 1px solid #c4c2bd; border-top: 0; border-radius: 0 0 4px 4px; background: linear-gradient(#e4e3e0, #f2f1f0); color: #4a4a4a; }
.dtab-on { width: 119px; height: 31px; background: linear-gradient(#fff, #f5f4f3); padding: 0 0 0 6px; }
.dti { width: 15px; height: 15px; margin: 0 9px 0 1px; }
.dx { width: 13px; height: 13px; margin-left: 9px; }
.dtab-on .dx { margin-left: 11px; }
.brand { position: absolute; left: 525px; top: 0; font: 700 34.7px/34px "Liberation Mono", monospace; color: #000; }
.status { flex: none; height: 29px; padding: 0 24px 0 0; display: flex; align-items: center; justify-content: flex-end; font-size: 14.3px; color: #5a5a5a; }

.fine-ln { stroke: #4c4c62; stroke-opacity: .5; stroke-width: 1; fill: none; shape-rendering: crispEdges; }
.ln-major { stroke: #4e4e68; stroke-opacity: .95; stroke-width: 1; stroke-dasharray: 6 4; fill: none; shape-rendering: crispEdges; }
.grid-edge { stroke: #4a4a62; stroke-width: 1; fill: none; shape-rendering: crispEdges; }
.ln-dash { stroke: #e2e2e2; stroke-opacity: .85; stroke-width: 1; stroke-dasharray: 5 4; fill: none; shape-rendering: crispEdges; }
.ax-x { stroke: #c86a6a; stroke-width: 1.5; fill: none; }
.ax-y { stroke: #6dc46d; stroke-width: 2; fill: none; }
.c-k { fill: none; stroke: #1f1f28; stroke-width: 1.8; }
.c-thin { stroke-width: 1.4; }
.c-b { fill: none; stroke: #0a0ad0; stroke-width: 1.4; }
.c-bl { stroke: #0a0ad0; stroke-width: 2; fill: none; }
.hole { fill: none; stroke: #fff; stroke-width: 2.4; }
.dim-l { stroke: #000; stroke-width: 1.6; fill: none; }
.dim-t { stroke: #000; stroke-width: 1; fill: none; }
.arrow { fill: #000; }
.ring { fill: none; stroke: #000; stroke-width: 1; }
.vtick { stroke: #000; stroke-width: 2; fill: none; }
.dim-txt { font: 21.5px "Liberation Sans", sans-serif; fill: #141414; }
.red { stroke: #f00; stroke-width: 2.4; fill: none; }
.dot { fill: #ff2a00; }
.cross { stroke: #f00; stroke-width: 2; fill: none; }
.ax-g { stroke: #2a8a2a; stroke-width: 2; fill: none; }
.ax-r { stroke: #8a2a2a; stroke-width: 2; fill: none; }
.ax-o { fill: #1a1a80; }
.ax-t { font: 10px "Noto Sans", sans-serif; fill: #222; }
```
